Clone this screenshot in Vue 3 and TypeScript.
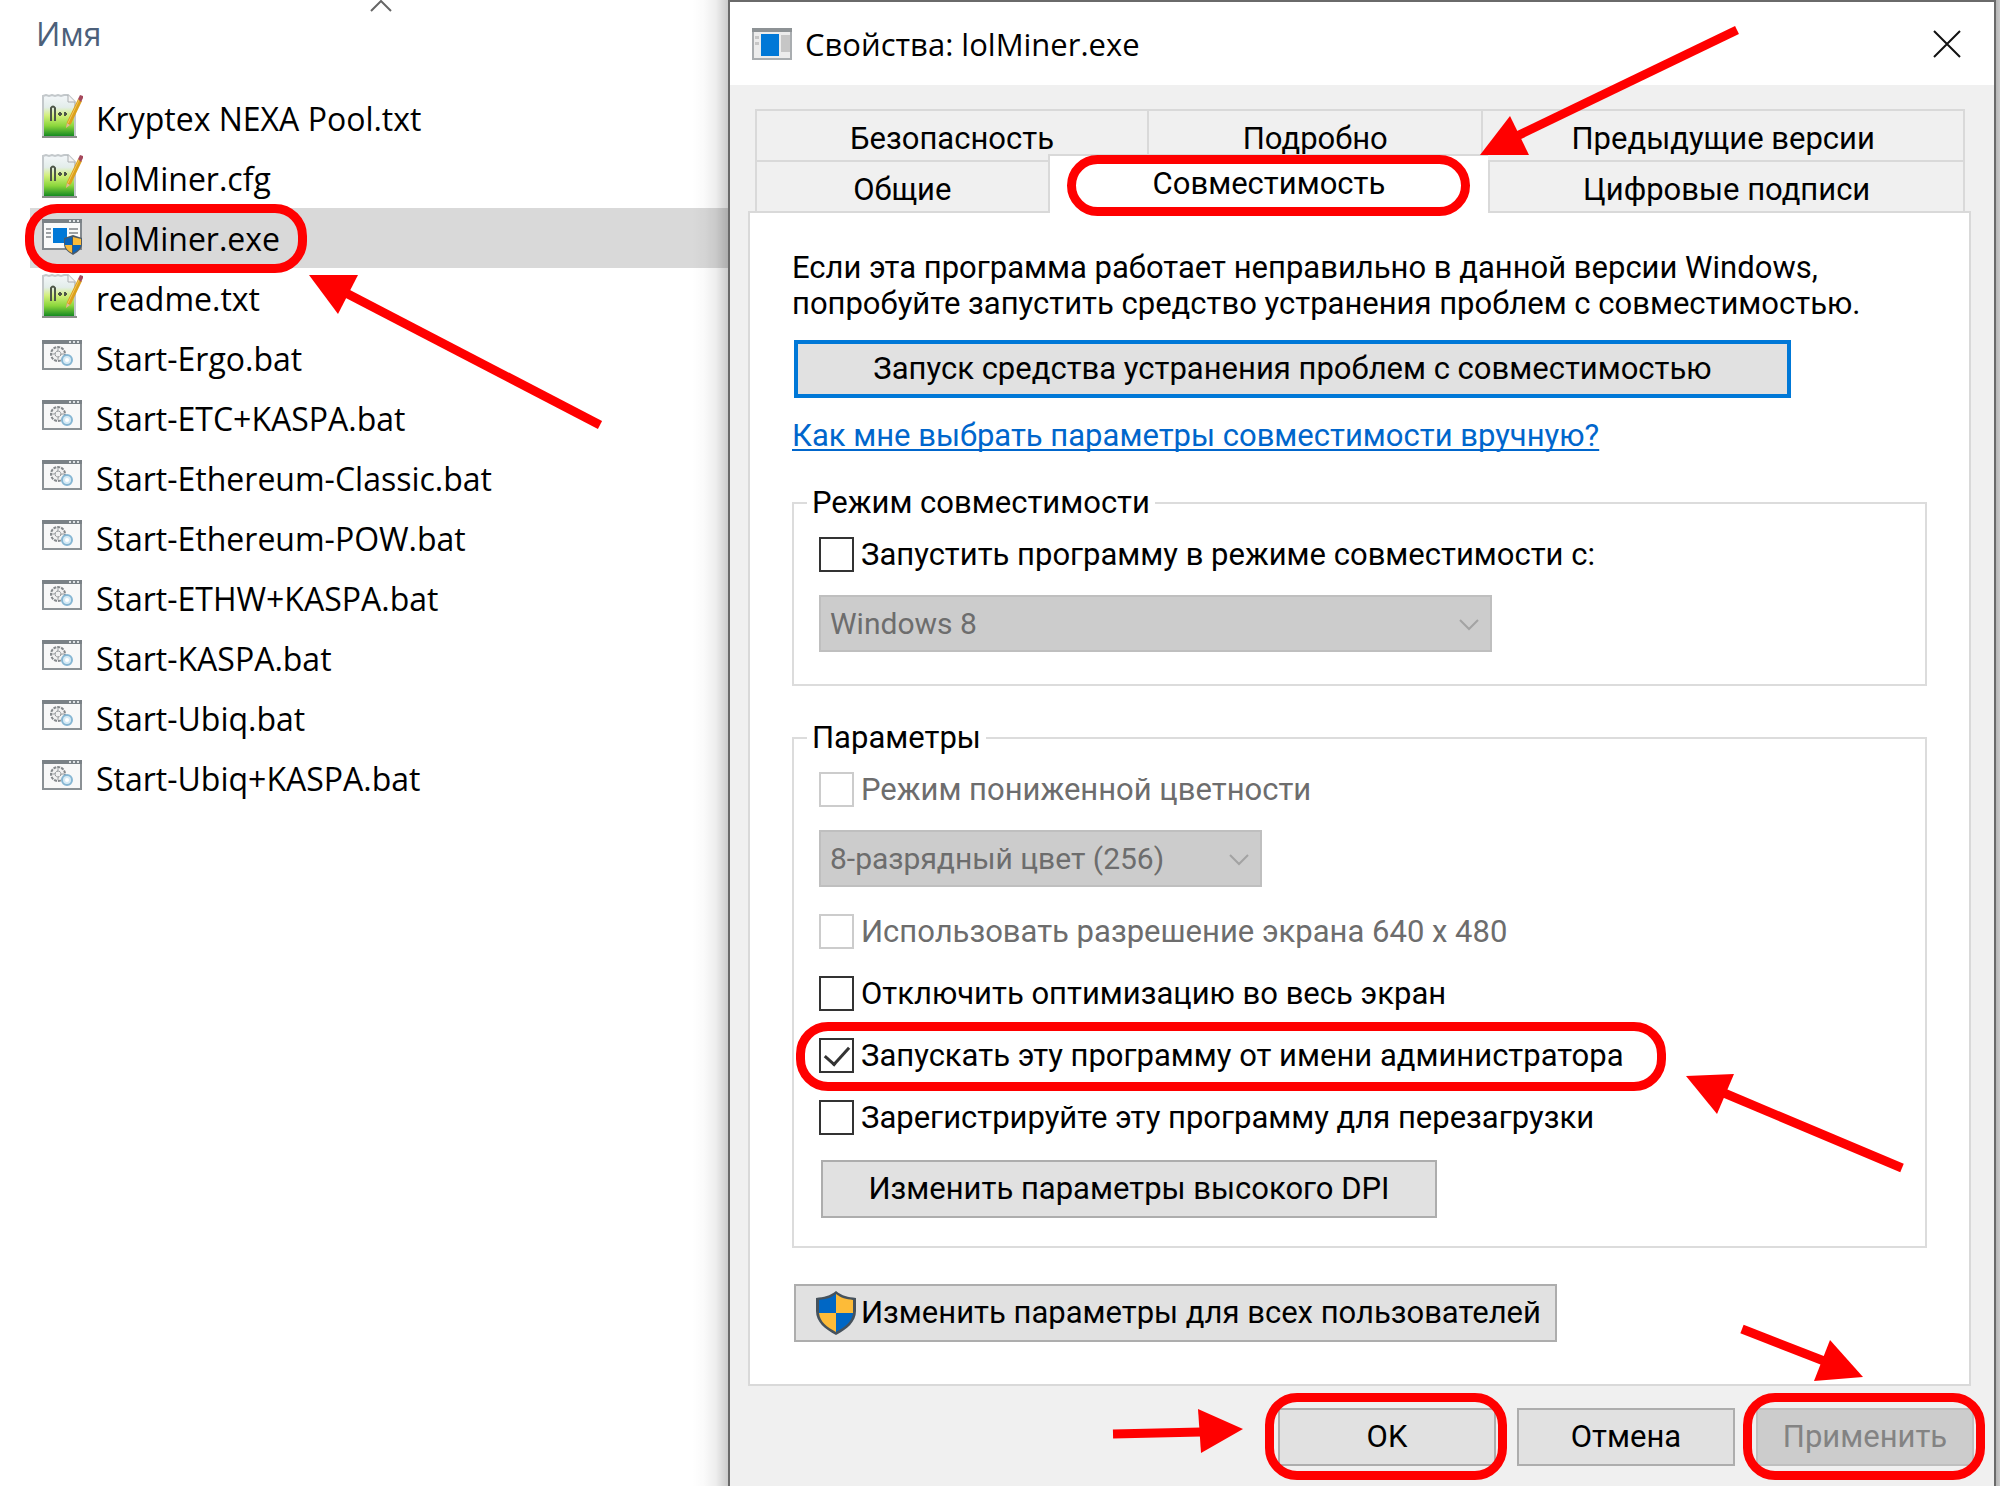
<script setup lang="ts">
import { ref } from 'vue'

type FileKind = 'text' | 'exe' | 'batch'
interface FileEntry {
  name: string
  kind: FileKind
}

const files: FileEntry[] = [
  { name: 'Kryptex NEXA Pool.txt', kind: 'text' },
  { name: 'lolMiner.cfg', kind: 'text' },
  { name: 'lolMiner.exe', kind: 'exe' },
  { name: 'readme.txt', kind: 'text' },
  { name: 'Start-Ergo.bat', kind: 'batch' },
  { name: 'Start-ETC+KASPA.bat', kind: 'batch' },
  { name: 'Start-Ethereum-Classic.bat', kind: 'batch' },
  { name: 'Start-Ethereum-POW.bat', kind: 'batch' },
  { name: 'Start-ETHW+KASPA.bat', kind: 'batch' },
  { name: 'Start-KASPA.bat', kind: 'batch' },
  { name: 'Start-Ubiq.bat', kind: 'batch' },
  { name: 'Start-Ubiq+KASPA.bat', kind: 'batch' },
]
const selected = ref('lolMiner.exe')

const compatMode = ref(false)
const reducedColor = ref(false)
const lowResolution = ref(false)
const noFullscreenOptimization = ref(false)
const runAsAdmin = ref(true)
const registerRestart = ref(false)
</script>

<template>
  <div class="screen">
    <section class="files">
      <button class="column-head" type="button">
        Имя
        <svg class="sort" viewBox="0 0 22 12" aria-hidden="true"><path d="M1 11 11 1l10 10" fill="none" stroke="#666" stroke-width="2" /></svg>
      </button>
      <ul class="file-list">
        <li v-for="file in files" :key="file.name" class="file" :class="{ selected: file.name === selected }" @click="selected = file.name">
          <span class="file-body" :class="{ callout: file.kind === 'exe' }">
            <svg v-if="file.kind === 'text'" class="icon tall" viewBox="0 0 42 44" aria-hidden="true">
              <defs>
                <linearGradient id="page" x1="0" y1="0" x2="0" y2="1">
                  <stop offset="0" stop-color="#f4f7fa" />
                  <stop offset=".3" stop-color="#e3edea" />
                  <stop offset=".5" stop-color="#d3f07c" />
                  <stop offset=".75" stop-color="#8bd63c" />
                  <stop offset="1" stop-color="#168a22" />
                </linearGradient>
              </defs>
              <path d="M1 1h27l6 7v34H1z" fill="url(#page)" />
              <path d="M2 42V2l3-1 3 1 3-1 3 1 3-1 3 1 3-1 4 0 7 7v34" fill="none" stroke="#c3c8cb" stroke-width="2" />
              <path d="M27 1v7h7" fill="#f4f4f4" stroke="#a9adb0" />
              <path d="M1 43h35" stroke="#8b8f8b" stroke-width="2" />
              <path d="M10 27V14q2-3 4 0v13M17 20h4M23 20h3M19 18v4M24 18v4" fill="none" stroke="#4d5648" stroke-width="2" />
              <path d="m25 34 1-6L37 5l4 2-11 23z" fill="#dca11c" />
              <path d="m27 29 11-23" stroke="#f2c65a" stroke-width="1" />
              <path d="m25 34 1-5 3 2z" fill="#d8bd96" />
              <path d="m37 5 2-4 3 1v2l-2 4z" fill="#a5485b" />
            </svg>
            <svg v-else-if="file.kind === 'exe'" class="icon" viewBox="0 0 42 38" aria-hidden="true">
              <path d="M2 2h38v29H2z" fill="#fafafa" stroke="#83898e" stroke-width="2" />
              <path d="M1 1h40v4H1z" fill="#7a8186" />
              <path d="M28 3h2M32 3h2M36 3h2" stroke="#dfe3e5" stroke-width="2" />
              <path d="M5 11h5M5 15h5M5 19h5M28 11h9M28 15h9" stroke="#9da1a4" stroke-width="2" />
              <path d="M12 10h14v15H12z" fill="#0078d7" />
              <path d="m32 17 9 3v6c0 5-4 8-9 11-5-3-9-6-9-11v-6z" fill="#4d5a66" />
              <path d="M31 19v8h-7v-6zM32 27h8c-1 4-4 6-8 8z" fill="#0a63b9" />
              <path d="M32 19v8h8v-6zM31 27h-7c1 4 3 6 7 8z" fill="#fbbb3a" />
            </svg>
            <svg v-else class="icon batch" viewBox="0 0 42 32" aria-hidden="true">
              <path d="M2 2h38v28H2z" fill="#f8f8f8" stroke="#8b9195" stroke-width="2" />
              <path d="M1 1h40v4H1z" fill="#7a8186" />
              <path d="M28 3h2M32 3h2M36 3h2" stroke="#dfe3e5" stroke-width="2" />
              <circle cx="17" cy="15" r="7" fill="#f1f1f1" stroke="#85898c" stroke-width="2" stroke-dasharray="3 1" />
              <circle cx="17" cy="15" r="3" fill="none" stroke="#85898c" stroke-dasharray="2 1" />
              <path d="M17 9v4M17 17v4M11 15h4M19 15h4" stroke="#9a9ea1" />
              <circle cx="26" cy="21" r="5" fill="#d6eaf5" stroke="#86b6d3" stroke-width="2" />
              <circle cx="26" cy="21" r="2" fill="#fff" />
            </svg>
            <span class="file-name">{{ file.name }}</span>
            <svg v-if="file.kind === 'exe'" class="arrow arrow-file" viewBox="0 0 300 160" aria-hidden="true">
              <path class="head" d="m4 4 49 0-20 39z" />
              <path d="m41 22 254 132" />
            </svg>
          </span>
        </li>
      </ul>
    </section>

    <section class="dialog" role="dialog" aria-labelledby="dialog-title">
      <header class="title-bar">
        <svg class="app-icon" viewBox="0 0 40 32" aria-hidden="true">
          <path d="M1 1h38v30H1z" fill="#ececec" stroke="#a9adb0" stroke-width="2" />
          <path d="M0 0h40v4H0z" fill="#8d9295" />
          <path d="M9 6h18v22H9z" fill="#0078d7" />
          <path d="M29 7h9v17h-9z" fill="#c6c6c6" />
          <path d="M3 8h4v3H3zM3 14h4v3H3z" fill="#c6c6c6" />
        </svg>
        <h1 id="dialog-title">Свойства: lolMiner.exe</h1>
        <button class="close" type="button" aria-label="Закрыть">
          <svg viewBox="0 0 28 28" aria-hidden="true"><path d="m1 1 26 26M27 1 1 27" stroke="#111" stroke-width="2" /></svg>
        </button>
      </header>

      <div class="tabs" role="tablist">
        <div class="tab-row upper">
          <button class="tab security" type="button" role="tab">Безопасность</button>
          <button class="tab details" type="button" role="tab">Подробно</button>
          <button class="tab versions" type="button" role="tab">Предыдущие версии</button>
        </div>
        <div class="tab-row lower">
          <button class="tab general" type="button" role="tab">Общие</button>
          <button class="tab compat callout" type="button" role="tab" aria-selected="true">
            Совместимость
            <svg class="arrow arrow-tab" viewBox="0 0 270 140" aria-hidden="true">
              <path class="head" d="m4 132 30-39 19 39z" />
              <path d="M41 113 261 7" />
            </svg>
          </button>
          <button class="tab signatures" type="button" role="tab">Цифровые подписи</button>
        </div>
      </div>

      <div class="panel" role="tabpanel">
        <p class="intro">Если эта программа работает неправильно в данной версии Windows,<br />попробуйте запустить средство устранения проблем с совместимостью.</p>
        <button class="push primary" type="button">Запуск средства устранения проблем с совместимостью</button>
        <a class="help" href="#">Как мне выбрать параметры совместимости вручную?</a>

        <fieldset>
          <legend>Режим совместимости</legend>
          <label class="check"><input v-model="compatMode" type="checkbox" />Запустить программу в режиме совместимости с:</label>
          <div class="select wide">
            <select disabled aria-label="Версия Windows"><option>Windows 8</option></select>
            <svg viewBox="0 0 20 12" aria-hidden="true"><path d="m1 1 9 9 9-9" fill="none" stroke="#a3a3a3" stroke-width="2" /></svg>
          </div>
        </fieldset>

        <fieldset class="settings">
          <legend>Параметры</legend>
          <label class="check off"><input v-model="reducedColor" type="checkbox" disabled />Режим пониженной цветности</label>
          <div class="select narrow">
            <select disabled aria-label="Глубина цвета"><option>8-разрядный цвет (256)</option></select>
            <svg viewBox="0 0 20 12" aria-hidden="true"><path d="m1 1 9 9 9-9" fill="none" stroke="#a3a3a3" stroke-width="2" /></svg>
          </div>
          <div class="options">
            <label class="check off"><input v-model="lowResolution" type="checkbox" disabled />Использовать разрешение экрана 640 x 480</label>
            <label class="check"><input v-model="noFullscreenOptimization" type="checkbox" />Отключить оптимизацию во весь экран</label>
            <label class="check admin callout">
              <input v-model="runAsAdmin" type="checkbox" />Запускать эту программу от имени администратора
              <svg class="arrow arrow-admin" viewBox="0 0 230 110" aria-hidden="true">
                <path class="head" d="m4 6 48-2-17 40z" />
                <path d="m42 23 178 75" />
              </svg>
            </label>
            <label class="check"><input v-model="registerRestart" type="checkbox" />Зарегистрируйте эту программу для перезагрузки</label>
          </div>
          <button class="push dpi" type="button">Изменить параметры высокого DPI</button>
        </fieldset>

        <button class="push all-users" type="button">
          <svg class="shield" viewBox="0 0 40 44" aria-hidden="true">
            <path d="M20 0c6 5 12 6 20 7v13c0 11-9 18-20 24C9 38 0 31 0 20V7c8-1 14-2 20-7z" fill="#46525c" />
            <path d="M20 3v19H3V9c7-1 12-2 17-6zM20 22h17c-1 9-8 14-17 19z" fill="#0067c5" />
            <path d="M20 3v19h17V9c-7-1-12-2-17-6zM20 22H3c1 9 8 14 17 19z" fill="#fdbb38" />
          </svg>
          Изменить параметры для всех пользователей
        </button>
      </div>

      <footer class="actions">
        <button class="push action callout" type="button">
          OK
          <svg class="arrow arrow-ok" viewBox="0 0 140 52" aria-hidden="true">
            <path class="head" d="m134 24-45-20 3 44z" />
            <path d="M92 27 4 29" />
          </svg>
        </button>
        <button class="push action" type="button">Отмена</button>
        <button class="push action callout" type="button" disabled>
          Применить
          <svg class="arrow arrow-apply" viewBox="0 0 130 62" aria-hidden="true">
            <path class="head" d="m126 52-33-37-16 41z" />
            <path d="M87 36 5 4" />
          </svg>
        </button>
      </footer>
    </section>
  </div>
</template>

<style>
body {
  margin: 0;
  background: #fff;
}
</style>

<style scoped>
* {
  box-sizing: border-box;
}

.screen {
  display: flex;
  min-height: 100vh;
  padding-right: 4px;
  overflow: hidden;
  background: linear-gradient(to left, #c9c9c9, #b5b5b5 4px, #fff 4px);
  font: 31px/36px Roboto, "Liberation Sans", sans-serif;
  color: #000;
}

button,
select {
  font: inherit;
  color: inherit;
}

/* File list */
.files {
  position: relative;
  z-index: 1;
  flex: 0 0 728px;
  min-width: 0;
  font: 32px/60px "Open Sans", "Noto Sans", sans-serif;
  background: linear-gradient(to left, rgba(0, 0, 0, 0.2), rgba(0, 0, 0, 0.07) 12px, rgba(0, 0, 0, 0.02) 24px, transparent 36px);
}

.column-head {
  position: relative;
  display: block;
  width: 100%;
  height: 88px;
  padding: 4px 0 24px 36px;
  border: 0;
  background: none;
  color: #4c607a;
  text-align: left;
}

.sort {
  position: absolute;
  top: 0;
  left: 370px;
  width: 22px;
}

.file-list {
  margin: 0;
  padding: 0 0 0 30px;
  list-style: none;
}

.file {
  height: 60px;
}

.file.selected {
  background: rgba(0, 0, 0, 0.15);
}

.file-body {
  position: relative;
  display: inline-flex;
  align-items: center;
  height: 60px;
  padding-left: 11px;
  gap: 13px;
  white-space: nowrap;
}

.file-name {
  padding-top: 2px;
}

.icon {
  width: 42px;
  margin-bottom: 2px;
}

.icon.tall {
  margin-bottom: 4px;
}

.icon.batch {
  margin-bottom: 6px;
}

/* Red highlight frames and arrows */
.callout {
  position: relative;
}

.callout::after {
  content: "";
  position: absolute;
  z-index: 2;
  border: 9px solid #f00;
  border-radius: 32px;
  pointer-events: none;
}

.file-body.callout::after {
  inset: -4px -27px -5px -5px;
}

.arrow {
  position: absolute;
  z-index: 3;
  overflow: visible;
  fill: none;
  stroke: #f00;
  stroke-width: 9px;
  pointer-events: none;
}

.arrow .head {
  fill: #f00;
  stroke: none;
}

/* Dialog */
.dialog {
  display: flex;
  flex: 1;
  flex-direction: column;
  min-width: 0;
  border: 2px solid #6a6a6a;
  border-bottom: 0;
  background: #f0f0f0;
}

.title-bar {
  display: flex;
  align-items: center;
  height: 83px;
  padding: 0 33px 0 22px;
  background: #fff;
}

.app-icon {
  width: 40px;
}

h1 {
  flex: 1;
  margin: 0 0 0 13px;
  font: 31px/42px "Open Sans", "Noto Sans", sans-serif;
}

.close {
  display: flex;
  padding: 0;
  border: 0;
  background: none;
}

.close svg {
  width: 28px;
}

.tabs {
  margin: 24px 29px 0 25px;
}

.tab-row {
  display: flex;
}

.tab {
  height: 51px;
  padding: 7px 0 0;
  border: solid #d9d9d9;
  border-width: 2px 0 0 2px;
  background: #f0f0f0;
  white-space: nowrap;
}

.tab:last-child {
  border-right-width: 2px;
}

.security { flex: 392 0 0; }
.details { flex: 334 0 0; }
.versions { flex: 482 0 0; }
.general { flex: 292 0 0; }
.compat { flex: 441 0 0; }
.signatures { flex: 475 0 0; }

.tab.compat {
  z-index: 1;
  height: 59px;
  margin: -6px 0 -2px;
  padding: 0 0 2px;
  background: #fff;
}

.compat.callout::after {
  inset: -1px 18px -3px 17px;
}

.panel {
  margin: 0 23px 0 18px;
  padding: 37px 42px;
  border: 2px solid #d9d9d9;
  background: #fff;
}

.intro {
  margin: 0 0 18px;
  white-space: nowrap;
}

.push {
  display: block;
  height: 58px;
  padding: 0;
  border: 2px solid #adadad;
  background: #e1e1e1;
  white-space: nowrap;
}

.push.primary {
  width: 997px;
  margin-left: 2px;
  border: 4px solid #0078d7;
}

.help {
  display: block;
  width: max-content;
  margin: 20px 0 31px;
  color: #0066cc;
  text-decoration-thickness: 2px;
  text-underline-offset: 3px;
  text-decoration-skip-ink: none;
}

fieldset {
  min-width: 0;
  margin: 0 0 34px;
  padding: 16px 25px 32px;
  border: 2px solid #dcdcdc;
}

fieldset.settings {
  margin-bottom: 36px;
  padding-bottom: 28px;
}

legend {
  margin-left: -12px;
  padding: 0 5px;
}

.check {
  display: flex;
  align-items: center;
  width: max-content;
  height: 35px;
  gap: 7px;
  white-space: nowrap;
}

.check input {
  display: grid;
  place-items: center;
  width: 35px;
  height: 35px;
  margin: 0;
  border: 2px solid #333;
  background: #fff;
  appearance: none;
}

.check input:checked::before {
  content: "";
  width: 11px;
  height: 21px;
  margin-bottom: 6px;
  border: solid #333;
  border-width: 0 3px 3px 0;
  transform: rotate(42deg);
}

.check.off {
  color: #6d6d6d;
}

.check.off input {
  border-color: #ccc;
}

.select {
  position: relative;
  height: 57px;
  margin-top: 23px;
  font-size: 30px;
}

.select.wide {
  width: 673px;
}

.select.narrow {
  width: 443px;
}

.select select {
  width: 100%;
  height: 100%;
  padding: 0 9px;
  border: 2px solid #bfbfbf;
  border-radius: 0;
  background: #ccc;
  color: #6d6d6d;
  opacity: 1;
  appearance: none;
}

.select svg {
  position: absolute;
  top: 24px;
  right: 13px;
  width: 20px;
}

.options {
  display: flex;
  flex-direction: column;
  gap: 27px;
  margin: 27px 0 25px;
}

.admin.callout::after {
  inset: -16px -42px -18px -23px;
}

.push.dpi {
  width: 616px;
  margin-left: 2px;
}

.push.all-users {
  display: flex;
  align-items: center;
  width: 763px;
  margin: 0 0 5px 2px;
  padding-left: 20px;
  gap: 5px;
}

.shield {
  width: 40px;
}

.actions {
  display: flex;
  justify-content: flex-end;
  gap: 21px;
  padding: 22px 20px 20px;
}

.action {
  width: 218px;
}

.action:disabled {
  border-color: #bfbfbf;
  background: #ccc;
  color: #838383;
}

.action.callout::after {
  inset: -17px -13px -16px -15px;
}

.arrow-file {
  top: 63px;
  left: 275px;
  width: 300px;
}

.arrow-tab {
  bottom: 50px;
  right: -258px;
  width: 270px;
}

.arrow-admin {
  top: 32px;
  left: 863px;
  width: 230px;
}

.arrow-ok {
  top: -5px;
  right: 245px;
  width: 140px;
}

.arrow-apply {
  top: -85px;
  right: 105px;
  width: 130px;
}
</style>
